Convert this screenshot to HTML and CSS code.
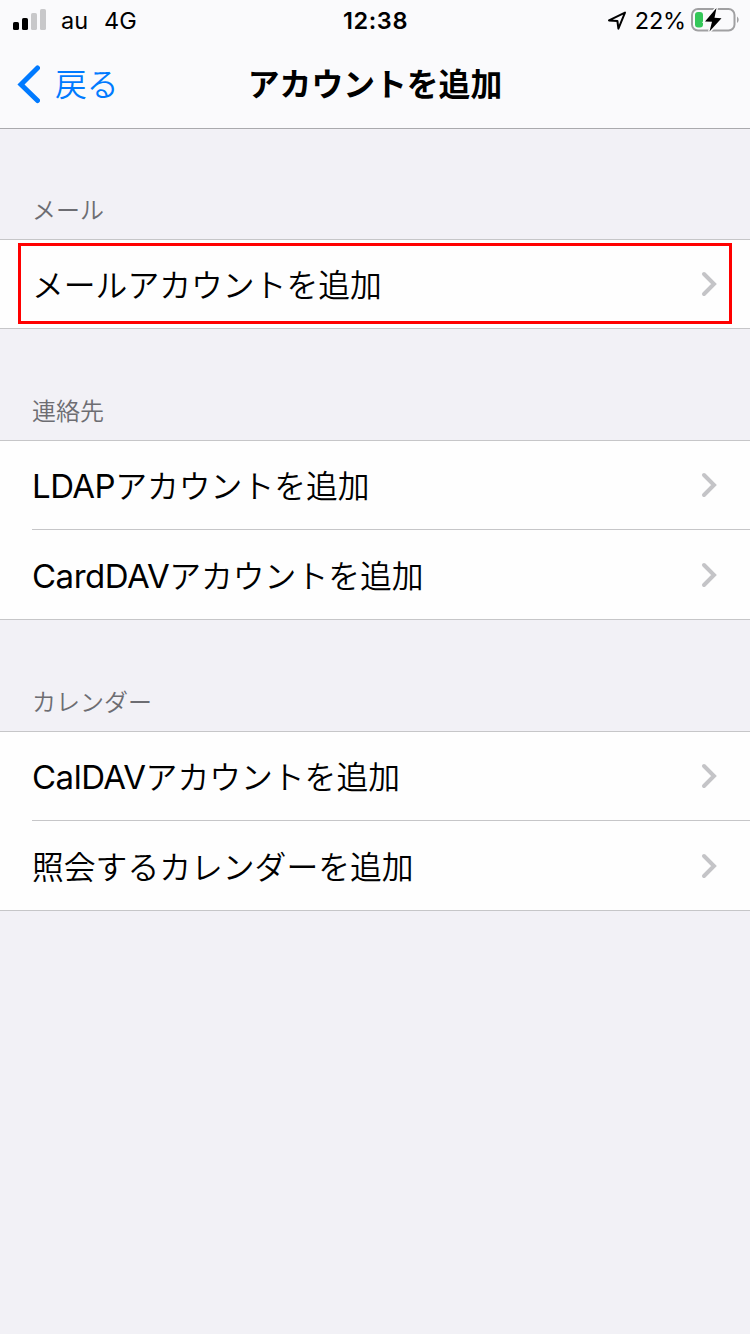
FILE: index.html
```html
<!DOCTYPE html>
<html lang="ja">
<head>
    <meta charset="UTF-8">
    <meta name="viewport" content="width=device-width, initial-scale=1.0">
    <title>アカウントを追加</title>
    <link rel="stylesheet" href="styles.css">
</head>
<body>

<header class="top">
    <div class="status-bar">
        <div class="status-left">
            <svg class="signal" width="34" height="22" viewBox="0 0 34 22">
                <rect x="0" y="13" width="6" height="8" rx="1.6"/>
                <rect x="9" y="9" width="6" height="12" rx="1.6"/>
                <rect class="off" x="18" y="4" width="6" height="17" rx="1.6"/>
                <rect class="off" x="27" y="0" width="6" height="21" rx="1.6"/>
            </svg>
            <span class="carrier">au</span>
            <span class="network">4G</span>
        </div>
        <div class="clock">12:38</div>
        <div class="status-right">
            <svg class="location" width="20" height="20" viewBox="0 0 20 20">
                <path d="M2 10.4 L18 2.6 L11.4 18.6 L10.4 11 Z"/>
            </svg>
            <span class="percent">22%</span>
            <svg class="battery" width="48" height="26" viewBox="0 0 48 26">
                <rect class="shell" x="1" y="2" width="42.5" height="21.5" rx="6"/>
                <path class="cap" d="M46 9.5 C48.2 11 48.2 14.5 46 16 Z"/>
                <rect class="level" x="4" y="5" width="8" height="15.5" rx="3"/>
                <path class="bolt-edge" d="M25.5 1 L14 14.5 L21 14.8 L18.5 24.5 L30.5 11.2 L23.5 10.8 Z"/>
                <path class="bolt" d="M25.5 1 L14 14.5 L21 14.8 L18.5 24.5 L30.5 11.2 L23.5 10.8 Z"/>
            </svg>
        </div>
    </div>
    <nav class="nav-bar">
        <a class="back" href="#">
            <svg width="24" height="40" viewBox="0 0 24 40">
                <path d="M21.5 4 L5 20.5 L21.5 36.5"/>
            </svg>
            <span>戻る</span>
        </a>
        <h1>アカウントを追加</h1>
    </nav>
</header>

<main>
    <section>
        <h2 class="first">メール</h2>
        <ul class="list">
            <li class="row highlight">
                <span class="label">メールアカウントを追加</span>
                <svg class="chevron" width="18" height="28" viewBox="0 0 18 28"><path d="M4 4 L14 14 L4 24"/></svg>
            </li>
        </ul>
    </section>
    <section>
        <h2>連絡先</h2>
        <ul class="list">
            <li class="row">
                <span class="label"><span class="latin">LDAP</span>アカウントを追加</span>
                <svg class="chevron" width="18" height="28" viewBox="0 0 18 28"><path d="M4 4 L14 14 L4 24"/></svg>
            </li>
            <li class="row">
                <span class="label"><span class="latin">CardDAV</span>アカウントを追加</span>
                <svg class="chevron" width="18" height="28" viewBox="0 0 18 28"><path d="M4 4 L14 14 L4 24"/></svg>
            </li>
        </ul>
    </section>
    <section>
        <h2>カレンダー</h2>
        <ul class="list">
            <li class="row">
                <span class="label"><span class="latin">CalDAV</span>アカウントを追加</span>
                <svg class="chevron" width="18" height="28" viewBox="0 0 18 28"><path d="M4 4 L14 14 L4 24"/></svg>
            </li>
            <li class="row">
                <span class="label">照会するカレンダーを追加</span>
                <svg class="chevron" width="18" height="28" viewBox="0 0 18 28"><path d="M4 4 L14 14 L4 24"/></svg>
            </li>
        </ul>
    </section>
</main>

</body>
</html>
```
FILE: styles.css
```css
* {
    box-sizing: border-box;
}
body {
    margin: 0;
    min-height: 1334px;
    background-color: #f2f1f6;
    color: #000;
    font-family: "Noto Sans CJK JP", sans-serif;
    font-size: 31.8px;
    font-weight: 350;
}
svg {
    display: block;
    flex: none;
}
.top {
    height: 129px;
    background-color: #fafafc;
    border-bottom: 1px solid #a9a9ad;
}
.status-bar {
    display: grid;
    grid-template-columns: 1fr auto 1fr;
    align-items: center;
    height: 40px;
    padding: 0 11px 0 13px;
    font-family: Inter, sans-serif;
    font-size: 23.5px;
    font-weight: 400;
}
.status-left, .status-right {
    display: flex;
    align-items: center;
}
.status-right {
    justify-content: flex-end;
}
.signal .off {
    fill: #c8c8ca;
}
.carrier {
    margin-left: 14px;
}
.network {
    margin-left: 16px;
}
.clock {
    margin-right: 1px;
    font-weight: 600;
    letter-spacing: 0.6px;
}
.location {
    margin-right: 8px;
}
.location path {
    fill: none;
    stroke: #000;
    stroke-width: 2;
    stroke-linejoin: round;
}
.percent {
    margin-right: 5px;
    letter-spacing: -0.2px;
}
.shell {
    fill: none;
    stroke: #a0a0a2;
    stroke-width: 2;
}
.cap {
    fill: #a0a0a2;
}
.level {
    fill: #34c759;
}
.bolt-edge {
    fill: none;
    stroke: #fafafc;
    stroke-width: 3;
}
.nav-bar {
    display: grid;
    grid-template-columns: 1fr auto 1fr;
    align-items: center;
    height: 88px;
    padding: 0 16px;
}
.back {
    display: flex;
    align-items: center;
    gap: 15px;
    color: #007aff;
    text-decoration: none;
}
.back span {
    padding-bottom: 5px;
}
.back path {
    fill: none;
    stroke: #007aff;
    stroke-width: 5;
    stroke-linecap: round;
    stroke-linejoin: miter;
}
h1 {
    margin: 0;
    padding-bottom: 5px;
    font-size: 31.8px;
    font-weight: 600;
}
h2 {
    display: flex;
    align-items: flex-end;
    height: 111px;
    margin: 0;
    padding: 0 32px 12px;
    color: #6d6d72;
    font-size: 24px;
    font-weight: 350;
    line-height: 36px;
}
h2.first {
    height: 110px;
}
.list {
    margin: 0;
    padding: 0;
    list-style: none;
    background-color: #fefefe;
    border-top: 1px solid #c6c6c8;
    border-bottom: 1px solid #c6c6c8;
}
.row {
    position: relative;
    display: flex;
    align-items: center;
    justify-content: space-between;
    height: 88px;
    padding-right: 32px;
    margin-left: 32px;
}
.row + .row {
    height: 90px;
    border-top: 1px solid #c6c6c8;
}
.label {
    padding-bottom: 2px;
}
.latin {
    font-family: Inter, sans-serif;
    font-size: 33px;
    font-weight: 400;
    line-height: 1;
    letter-spacing: -0.5px;
}
.chevron path {
    fill: none;
    stroke: #c4c4c7;
    stroke-width: 4;
    stroke-linecap: round;
}
/* red frame around the row to tap */
.highlight::after {
    content: "";
    position: absolute;
    top: 3px;
    right: 18px;
    bottom: 4px;
    left: -14px;
    border: 3px solid #ff0000;
}
```
